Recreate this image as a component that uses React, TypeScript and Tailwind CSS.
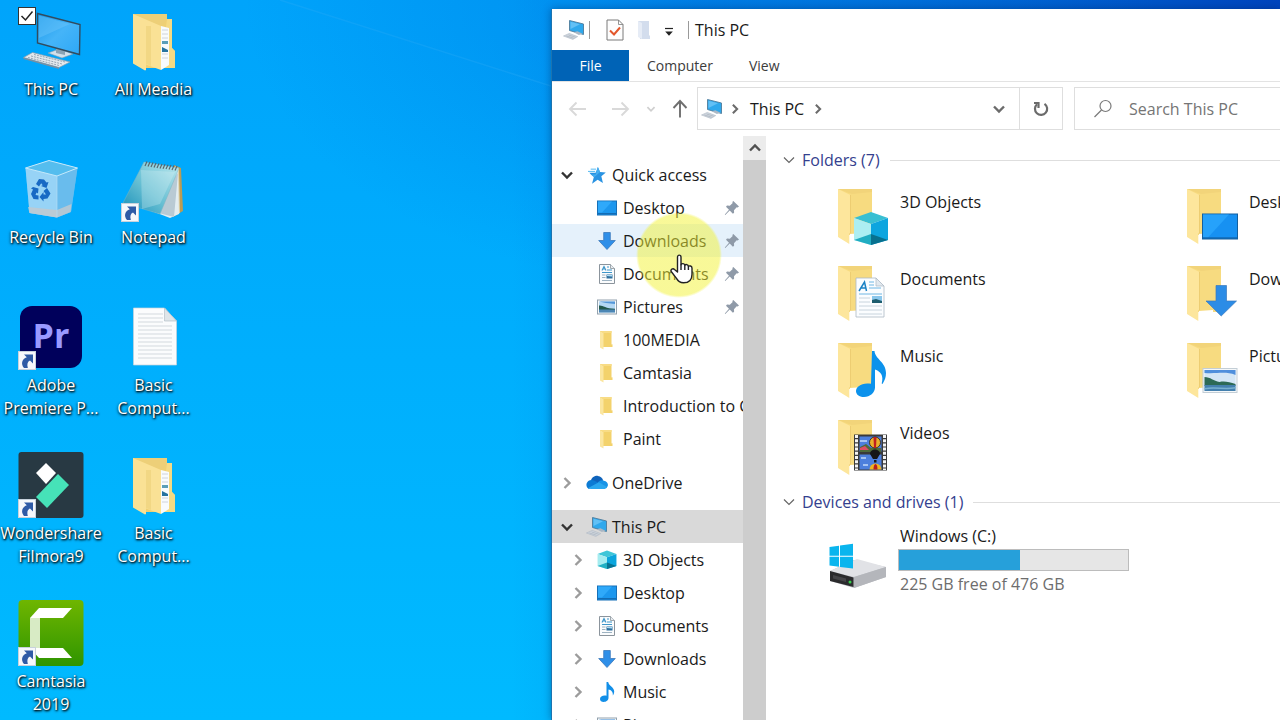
import { useId, type ReactNode } from "react";

/* ---------- small glyphs ---------- */

function Chevron({ dir, className = "", weight = 2.4 }: { dir: "down" | "right" | "up"; className?: string; weight?: number }) {
  const d = dir === "down" ? "M2 4.5 7 9.5 12 4.5" : dir === "up" ? "M2 9.5 7 4.5 12 9.5" : "M4.5 2 9.5 7 4.5 12";
  return (
    <svg viewBox="0 0 14 14" className={`shrink-0 ${className}`} fill="none" stroke="currentColor" strokeWidth={weight} aria-hidden="true">
      <path d={d} />
    </svg>
  );
}

function Pin() {
  return (
    <svg viewBox="0 0 16 16" className="size-4 shrink-0" fill="#8f9aa8" aria-hidden="true">
      <path d="M9.3 1 15 6.6l-1.4.9-.9-.3-2.7 3 .1 2.6-1.2 1-3.2-3.2L1.3 15l-.5-.4 4.2-4.8L2 6.7l1-1.1 2.8.1 2.900-2.600-.4-1z" />
    </svg>
  );
}

function PcSmall() {
  return (
    <svg viewBox="0 0 22 20" className="h-5 w-[22px] shrink-0" aria-hidden="true">
      <path d="m6.500.5 14 3.500v10.500L6.500 10.500z" fill="#2fa8ec" stroke="#4f7c9b" strokeWidth="0.900" />
      <path d="m7.500 1.800 9.500 2.500-9.500 4.800z" fill="#62c0f5" />
      <path d="m10.500 12.300 4-1 5 2.400-3.600 1.300z" fill="#aab7c4" />
      <path d="m.5 16 5.800-2.600 8.400 3.200-4.800 2.800z" fill="#d0d7df" stroke="#adb7c2" strokeWidth="0.600" />
      <path d="m3.400 16 7.200 2.200M5.600 15l7 2.200" stroke="#a2adb8" strokeWidth="0.600" />
    </svg>
  );
}

function StarIcon() {
  return (
    <svg viewBox="0 0 20 20" className="size-[18px] shrink-0" aria-hidden="true">
      <path d="m11 1 2.400 5.800 6.400.4-5 4.300 1.800 7.300-5.900-3.500-6.200 4.500 2-7.500-3.300-2.800-1.700-2h7z" fill="#2a93e2" />
      <path d="m11 1 2.400 5.800-6.200 5.500L3.200 9.500H8.500z" fill="#45aef0" />
      <path d="M3 3.500h6M0 6h8" stroke="#53b9f2" strokeWidth="1.100" />
    </svg>
  );
}

function DesktopSmall() {
  return (
    <svg viewBox="0 0 20 20" className="size-5 shrink-0" aria-hidden="true">
      <rect x="0.500" y="3" width="19" height="14" fill="#1c97ee" stroke="#1670b8" />
      <path d="M1 3.500h14L5 14.500H1z" fill="#2fa9fa" />
      <path d="M1 15.700h18" stroke="#1468ad" strokeWidth="1.200" />
    </svg>
  );
}

function DownloadSmall() {
  return (
    <svg viewBox="0 0 20 20" className="size-5 shrink-0" aria-hidden="true">
      <path d="M6.700 1.500h6.600V9.500h5L10 18.500 1.700 9.500h5z" fill="#2f8fe8" stroke="#3a78bb" strokeWidth="0.800" />
    </svg>
  );
}

function DocumentSmall() {
  return (
    <svg viewBox="0 0 20 20" className="size-5 shrink-0" aria-hidden="true">
      <path d="M2.500.500h11l4 4v15h-15z" fill="#fbfcfd" stroke="#8b949c" />
      <path d="M13.500.500v4h4" fill="#e8ecef" stroke="#8b949c" strokeWidth="0.800" />
      <path d="M5 6.500 7 2.500l2 4M5.500 5h3M10 3h2M10 6h5M5 8.500h10" stroke="#3e96ca" fill="none" strokeWidth="1.100" />
      <path d="M5 11h3.500M5 13.500h3.500M5 16.500h10" stroke="#9eb3c2" />
      <rect x="9.500" y="10.500" width="6" height="4" fill="#2f6f9d" />
      <path d="M10 11h5v1.500l-5-.5z" fill="#aedcf5" />
    </svg>
  );
}

function PictureSmall() {
  return (
    <svg viewBox="0 0 20 20" className="size-5 shrink-0" aria-hidden="true">
      <rect x="0.500" y="3" width="19" height="14" fill="#f7fafc" stroke="#93a2ae" />
      <rect x="2" y="4.500" width="16" height="11" fill="#b4d8f4" />
      <path d="M2 4.500h16v2.500L9 6z" fill="#5497d8" />
      <path d="M2 8.500c4-.5 6 3 16 3.300v1.700H2z" fill="#23594c" />
      <path d="M2 12.500h16v3H2z" fill="#4c86b4" />
    </svg>
  );
}

function FolderSmall() {
  return (
    <svg viewBox="0 0 20 20" className="size-5 shrink-0" aria-hidden="true">
      <path d="M3 1h11.500v13.500l1-.3V17H5.500z" fill="#f3d26c" />
      <path d="M3 1l3.500 2v16.500L3 17.500z" fill="#fbe6a0" />
      <path d="M6.500 3h8V1H3z" fill="#f8dc86" />
    </svg>
  );
}

function CubeIcon({ className }: { className: string }) {
  return (
    <svg viewBox="0 0 36 36" className={`shrink-0 ${className}`} aria-hidden="true">
      <path d="m18 1 17 6-17 6L1 7z" fill="#3fc6d8" />
      <path d="m1 7 17 6v21L1 29z" fill="#a5ecf0" />
      <path d="m35 7-17 6v21l17-5z" fill="#0ba5dd" />
      <path d="m1 29 17-6.500V34z" fill="#22b0c4" />
      <path d="m35 29-17-6.500V34z" fill="#087391" />
    </svg>
  );
}

function MusicSmall() {
  return (
    <svg viewBox="0 0 20 20" className="size-5 shrink-0" aria-hidden="true">
      <path d="M9.500 0h1.700c.3 4 6 5 6 9.500 0 1.500-.6 3-1.400 4 .5-4-2-5.500-4.300-6v8.200c0 2.500-2.300 4.200-4.800 4.200-2.200 0-3.700-1-3.700-2.900 0-2.300 3-4 6.500-3.200z" fill="#128fe8" />
    </svg>
  );
}

function CloudIcon() {
  return (
    <svg viewBox="0 0 24 16" className="h-[15px] w-[22px] shrink-0" aria-hidden="true">
      <path d="M5 7C6 2 10 .5 13 .8c3 .4 5 2.200 5.700 5L12 11z" fill="#0f63bb" />
      <path d="M5.500 5.300c3 0 5 1.500 10 4L3 15C-1.500 12.500.5 5.600 5.500 5.300z" fill="#0c7bd4" />
      <path d="M13 8c2-2.500 4.500-3 6.500-2 4.500.5 6 5.500 2.500 8z" fill="#1793e6" />
      <path d="M2.500 14 14 7.800l9 5c-.6 1.500-2 2.400-4 2.400H5.500c-1.200 0-2.300-.4-3-1.200z" fill="#2aa7ef" />
    </svg>
  );
}

/* ---------- desktop icons (66 x 66) ---------- */

function Shortcut() {
  return (
    <g>
      <rect x="0.500" y="47.500" width="17" height="18" fill="#f6f8fb" stroke="#c8d2dc" />
      <path d="M6 50.500h9v9l-3-3C9.500 57.500 8.800 60 9.800 64H6C2.500 60 4 55 8.800 53.300z" fill="#2f5ba6" />
    </g>
  );
}

function Tile({ children }: { children: ReactNode }) {
  return (
    <svg viewBox="0 0 66 66" className="size-[66px]" aria-hidden="true">
      {children}
    </svg>
  );
}

function ThisPcArt() {
  const id = useId();
  return (
    <Tile>
      <linearGradient id={id} x1="0" y1="0" x2="1" y2="1">
        <stop offset="0" stopColor="#1797e8" />
        <stop offset="0.500" stopColor="#45b4f8" />
        <stop offset="1" stopColor="#2ea8f6" />
      </linearGradient>
      <path d="m30 45 11-4 14 5-11 4z" fill="#d3e0ea" stroke="#7f9bb0" strokeWidth="0.600" />
      <path d="m38 40 9 2v5l-9-2z" fill="#8ba3b5" />
      <path d="m19.500 5.500 42.500 11-.5 30L19.500 35z" fill={`url(#${id})`} stroke="#324b5e" strokeWidth="1.400" />
      <path d="m21 7.500 31 8.500-31 14z" fill="#6cc5fb" opacity="0.450" />
      <path d="m5.500 49.500 9-5L52 54l-11 5.500z" fill="#e3e9ee" stroke="#8a9cab" strokeWidth="0.700" />
      <path d="m5.500 49.500 35.500 10v1.400l-35.500-10z" fill="#7990a2" />
      <path d="m10 49.500 31 8M13 48l31 8M16 46.500l31 7.500" stroke="#8b9dab" strokeWidth="0.900" strokeDasharray="2 1" />
    </Tile>
  );
}

function FolderFullArt() {
  return (
    <Tile>
      <path d="M12 6h34v5h5v29l3 3v17H20z" fill="#efd074" />
      <path d="M46 11h5v29l3 3v17H40z" fill="#f5da84" />
      <path d="m40 18 8 2v37l-8 5z" fill="#f8fbfd" />
      <path d="M41 22h6M41 26h6M41 30h6M41 46h6M41 50h6" stroke="#c5ccd3" strokeWidth="0.800" />
      <path d="M41 33h6v3h-6z" fill="#5a9eb8" />
      <path d="m41 39 6 3v2h-6z" fill="#26739f" />
      <path d="M12 6h34v5l-6 7-15-5z" fill="#edcf78" />
      <path d="m12 6 28 12v44l-15-5.500V62l-1 .5-12-7z" fill="#fae195" />
      <path d="M25 18h5v40l-5-2z" fill="#edd07a" opacity="0.600" />
    </Tile>
  );
}

function RecycleArt() {
  return (
    <Tile>
      <path d="M7.500 12 31 4.500 59.500 12 53 56 39 61.500 11.500 57z" fill="#7fc8f3" fillOpacity="0.850" />
      <path d="M7.500 12 39 20 39 61.500 11.500 57z" fill="#a5d8f5" fillOpacity="0.750" />
      <path d="M39 20 59.500 12 53 56 39 61.500z" fill="#68b9e9" fillOpacity="0.700" />
      <path d="m7.500 12 23.500-7.500L59.500 12 39 20z" fill="#55bdee" stroke="#c5e9fb" strokeWidth="1" />
      <path d="m10 51 29 3 14.500-6-1 8L39 61.500 11.500 57z" fill="#bfc9d0" fillOpacity="0.850" />
      <path d="M39 20v41" stroke="#b5ddf3" strokeWidth="0.700" />
      <g fill="#1769c4">
        <path d="m18 28 3-5 5 .500 2.500 3 2-.5-2 6-5.500-2 1.700-.8-1.500-2-2.200 3.200z" />
        <path d="m29 32 3.500 5.500-3 5-4 .5v2.500L21.500 41l4-5v2.500h2.500l-2.500-3.500z" />
        <path d="m15 31 5.500 1.500-.5 5-1.500-1-1 2.500 3 .5v4l-5-.5-2.500-5 2-4.500-2-1z" />
      </g>
    </Tile>
  );
}

function NotepadArt() {
  const id = useId();
  return (
    <Tile>
      <linearGradient id={id} x1="0" y1="1" x2="1" y2="0">
        <stop offset="0" stopColor="#178fb8" />
        <stop offset="0.450" stopColor="#67bfd3" />
        <stop offset="1" stopColor="#bce8ee" />
      </linearGradient>
      <path d="m53 9 7 3 2 43-10 6z" fill="#b99b55" />
      <path d="m54 10 4 3 1 44-9 4z" fill="#dfd1a7" />
      <path d="m23 52 30-40 4 3 1 43-9 4z" fill="#e3edf1" />
      <path d="m30 55 27-38-4 44z" fill="#b9cad4" />
      <path d="m23 6 35 6-19 46L2 47z" fill={`url(#${id})`} stroke="#78b5c4" strokeWidth="0.500" />
      <path d="m20 14 34 2-15 32-18 5z" fill="#e0f5f8" opacity="0.280" />
      <path d="m24 10 2-4.500M27 10.500l2-4.500M30 11l2-4.500M33 11.500 35 7M36 12l2-4.500M39 12.500 41 8M42 12.800l2-4.500M45 13l2-4.300M48 13.500 50 9M51 14l2-4.500M54 14.500l2-4.500" stroke="#58666d" strokeWidth="1.200" />
      <Shortcut />
    </Tile>
  );
}

function PremiereArt() {
  return (
    <div className="relative grid size-[62px] place-items-center rounded-xl bg-[#00005b] pb-1 font-['Open_Sans',sans-serif] text-[34px] leading-none font-bold text-[#9999ff] [text-shadow:none]">
      <span>Pr</span>
      <svg viewBox="0 0 66 66" className="absolute -top-[2px] -left-0.5 size-[66px]" aria-hidden="true"><Shortcut /></svg>
    </div>
  );
}

function FilmoraArt() {
  return (
    <Tile>
      <rect x="0.500" y="0" width="65" height="66" rx="3" fill="#283943" />
      <path d="m28 11 10 10-10 11-10-11z" fill="#fff" />
      <path d="m40 22 11 11-22 23-11-11z" fill="#46e2b8" />
      <Shortcut />
    </Tile>
  );
}

function CamtasiaArt() {
  const id = useId();
  return (
    <Tile>
      <linearGradient id={id} x1="0" y1="0" x2="0" y2="1">
        <stop offset="0" stopColor="#6fb600" />
        <stop offset="1" stopColor="#2f9500" />
      </linearGradient>
      <rect x="0.500" y="0" width="65" height="66" rx="4" fill={`url(#${id})`} />
      <path d="M12 18h10v31l-4 4-6-5z" fill="#d8ebc5" />
      <path d="M21 8h33l-9 10H12z" fill="#fff" />
      <path d="M12 48h33l9 10H21z" fill="#fff" />
      <Shortcut />
    </Tile>
  );
}

function TextFileArt() {
  return (
    <Tile>
      <path d="M12.500 4h31l12 13v44h-43z" fill="#fbfcfd" stroke="#c9d3da" strokeWidth="0.700" />
      <path d="M43.500 4v13h12z" fill="#dfe5e9" stroke="#b5c0c8" strokeWidth="0.700" />
      <path d="M17 10h25M17 14h25M17 18h25M17 22h34M17 26h34M17 30h34M17 34h34M17 38h34M17 42h34M17 46h34M17 50h34M17 54h34" stroke="#d3d9de" strokeWidth="1" />
    </Tile>
  );
}

const desktopItems: { lines: string[]; art: ReactNode; checked?: boolean }[] = [
  { lines: ["This PC"], art: <ThisPcArt />, checked: true },
  { lines: ["Recycle Bin"], art: <RecycleArt /> },
  { lines: ["Adobe", "Premiere P..."], art: <PremiereArt /> },
  { lines: ["Wondershare", "Filmora9"], art: <FilmoraArt /> },
  { lines: ["Camtasia", "2019"], art: <CamtasiaArt /> },
  { lines: ["All Meadia"], art: <FolderFullArt /> },
  { lines: ["Notepad"], art: <NotepadArt /> },
  { lines: ["Basic", "Comput..."], art: <TextFileArt /> },
  { lines: ["Basic", "Comput..."], art: <FolderFullArt /> },
];

function Desktop() {
  return (
    <section aria-label="Desktop" className="relative w-[551px] shrink-0">
      <svg viewBox="0 0 551 200" className="absolute inset-x-0 top-0" fill="none" aria-hidden="true">
        <path d="M280 0 551 86" stroke="#35b0f8" strokeOpacity="0.250" strokeWidth="1.500" />
      </svg>
      <ul className="relative grid w-[205px] grid-flow-col grid-cols-[102px_103px] grid-rows-[repeat(5,148px)] pt-2">
        {desktopItems.map((item, i) => (
          <li key={i} className="relative">
            <button type="button" className="flex w-full flex-col items-center gap-1 text-base leading-[23px] whitespace-nowrap text-white [text-shadow:1px_1px_2px_#000,0_1px_3px_rgba(0,0,0,0.8)]">
              <span className="grid size-[66px] place-items-center">{item.art}</span>
              <span>
                {item.lines.map((line) => (
                  <span key={line} className="block">{line}</span>
                ))}
              </span>
            </button>
            {item.checked && (
              <span className="absolute -top-px left-[18px] grid size-[18px]">
                <input type="checkbox" defaultChecked aria-label={item.lines[0]} className="peer col-start-1 row-start-1 size-[18px] appearance-none border border-[#333] bg-white" />
                <svg viewBox="0 0 18 18" className="pointer-events-none col-start-1 row-start-1 size-[18px] opacity-0 peer-checked:opacity-100" fill="none" stroke="#222" strokeWidth="1.500" aria-hidden="true">
                  <path d="m3.500 9 4 4 7-8.500" />
                </svg>
              </span>
            )}
          </li>
        ))}
      </ul>
    </section>
  );
}

/* ---------- window chrome ---------- */

function TitleBar() {
  return (
    <header className="flex h-[41px] items-center pl-[11px] text-base text-[#1a1a1a]">
      <PcSmall />
      <span className="ml-1 h-[18px] w-px bg-[#9a9a9a]" />
      <button type="button" aria-label="Properties" className="ml-4">
        <svg viewBox="0 0 18 22" className="h-[22px] w-[18px]" aria-hidden="true">
          <path d="M1 1h11.500L17 5.500V21H1z" fill="#fdfdfd" stroke="#7b7b7b" />
          <path d="M12.500 1v4.500H17" fill="none" stroke="#7b7b7b" strokeWidth="0.800" />
          <path d="m4 11.500 4 4 6-7" fill="none" stroke="#e2562b" strokeWidth="2" />
        </svg>
      </button>
      <button type="button" aria-label="New folder" className="ml-3">
        <svg viewBox="0 0 16 20" className="h-5 w-4" aria-hidden="true">
          <path d="M2 1h11v14l1 1v3H4z" fill="#d3dded" />
          <path d="m2 1 4 2v16l-4-2z" fill="#e6ecf6" />
        </svg>
      </button>
      <button type="button" aria-label="Customize Quick Access Toolbar" className="ml-3 pt-1">
        <svg viewBox="0 0 10 10" className="size-2.5" aria-hidden="true">
          <path d="M1 1.500h8" stroke="#222" strokeWidth="1.200" />
          <path d="M1.200 4.500h7.600L5 8.700z" fill="#222" />
        </svg>
      </button>
      <span className="mr-1.5 ml-3.5 h-[18px] w-px bg-[#9a9a9a]" />
      <h1>This PC</h1>
    </header>
  );
}

function Ribbon() {
  return (
    <div className="flex h-8 border-b border-[#e3e3e3] text-sm text-[#3c3c3c]">
      <button type="button" className="h-[31px] w-[77px] bg-[#0063b6] text-white">File</button>
      <button type="button" className="ml-[18px]">Computer</button>
      <button type="button" className="ml-9">View</button>
    </div>
  );
}

function Arrow({ d, className }: { d: string; className: string }) {
  return (
    <svg viewBox="0 0 20 20" className={`size-5 ${className}`} fill="none" stroke="currentColor" strokeWidth="1.900" aria-hidden="true">
      <path d={d} />
    </svg>
  );
}

function AddressRow() {
  return (
    <div className="flex items-center pt-[5px] pb-1.5">
      <div className="flex w-[145px] shrink-0 items-center pl-4">
        <button type="button" aria-label="Back"><Arrow d="M18 10H2M8.500 3.500 2 10l6.500 6.500" className="text-[#d9d9d9]" /></button>
        <button type="button" aria-label="Forward" className="ml-[22px]"><Arrow d="M2 10h16M11.500 3.500 18 10l-6.500 6.500" className="text-[#d9d9d9]" /></button>
        <button type="button" aria-label="Recent locations" className="ml-4"><Chevron dir="down" className="size-2.5 text-[#cfcfcf]" /></button>
        <button type="button" aria-label="Up" className="ml-3.5"><Arrow d="M10 18.500V2M3.500 9 10 2l6.500 7" className="text-[#6f6f6f]" /></button>
      </div>
      <div className="flex h-[43px] w-[366px] shrink-0 border border-[#dedede] text-[#1a1a1a]">
        <div className="flex flex-1 items-center pl-[3px]">
          <PcSmall />
          <Chevron dir="right" className="ml-1.5 size-3 text-[#6b6b6b]" />
          <button type="button" className="ml-[9px] text-base">This PC</button>
          <Chevron dir="right" className="ml-2 size-3 text-[#6b6b6b]" />
        </div>
        <button type="button" aria-label="Previous locations" className="grid w-10 place-items-center"><Chevron dir="down" className="size-3.5 text-[#6b6b6b]" /></button>
        <button type="button" aria-label="Refresh" className="grid w-[43px] place-items-center border-l border-[#dedede]">
          <svg viewBox="0 0 16 16" className="size-4" fill="none" stroke="#6b6b6b" strokeWidth="2.200" aria-hidden="true">
            <path d="M11.500 2.800A6.100 6.100 0 1 1 4 3.300" />
            <path d="M1 2h4.500v5" />
          </svg>
        </button>
      </div>
      <label className="ml-[11px] flex h-[43px] w-[340px] shrink-0 items-center border border-[#dedede] pl-[18px]">
        <svg viewBox="0 0 20 20" className="size-5" fill="none" stroke="#7a7a7a" strokeWidth="1.200" aria-hidden="true">
          <circle cx="12.500" cy="7" r="5.500" />
          <path d="M8.500 11 1.500 18" />
        </svg>
        <input type="search" aria-label="Search This PC" placeholder="Search This PC" className="ml-4 min-w-0 flex-1 text-base outline-none placeholder:text-[#757575]" />
      </label>
    </div>
  );
}

/* ---------- navigation pane ---------- */

function RootRow({ label, icon, open, selected }: { label: string; icon: ReactNode; open?: boolean; selected?: boolean }) {
  return (
    <button type="button" aria-expanded={!!open} className={`flex h-[33px] w-full shrink-0 items-center pl-2 text-left ${selected ? "bg-[#d9d9d9]" : ""}`}>
      <Chevron dir={open ? "down" : "right"} className={open ? "size-3.5 text-[#333]" : "size-3.5 text-[#9c9c9c]"} />
      <span className="ml-2 flex w-[30px] justify-center">{icon}</span>
      <span>{label}</span>
    </button>
  );
}

function ChildRow({ label, icon, pinned, expandable, hover }: { label: string; icon: ReactNode; pinned?: boolean; expandable?: boolean; hover?: boolean }) {
  return (
    <li>
      <button type="button" className={`flex h-[33px] w-full items-center pr-[3px] pl-[19px] text-left whitespace-nowrap hover:bg-[#e5f1fb] ${hover ? "bg-[#e5f1fb]" : ""}`}>
        <span className="w-[26px] shrink-0">{expandable && <Chevron dir="right" className="size-3.5 text-[#9c9c9c]" />}</span>
        {icon}
        <span className="ml-1.5 flex-1">{label}</span>
        {pinned && <Pin />}
      </button>
    </li>
  );
}

function NavPane() {
  return (
    <nav aria-label="Navigation pane" className="flex w-[191px] shrink-0 flex-col gap-[11px] overflow-hidden pt-[22px] text-base text-[#1a1a1a]">
      <div className="shrink-0">
        <RootRow open label="Quick access" icon={<StarIcon />} />
        <ul>
          <ChildRow pinned label="Desktop" icon={<DesktopSmall />} />
          <ChildRow pinned hover label="Downloads" icon={<DownloadSmall />} />
          <ChildRow pinned label="Documents" icon={<DocumentSmall />} />
          <ChildRow pinned label="Pictures" icon={<PictureSmall />} />
          <ChildRow label="100MEDIA" icon={<FolderSmall />} />
          <ChildRow label="Camtasia" icon={<FolderSmall />} />
          <ChildRow label="Introduction to Computer" icon={<FolderSmall />} />
          <ChildRow label="Paint" icon={<FolderSmall />} />
        </ul>
      </div>
      <RootRow label="OneDrive" icon={<CloudIcon />} />
      <div className="shrink-0">
        <RootRow open selected label="This PC" icon={<PcSmall />} />
        <ul>
          <ChildRow expandable label="3D Objects" icon={<CubeIcon className="size-5" />} />
          <ChildRow expandable label="Desktop" icon={<DesktopSmall />} />
          <ChildRow expandable label="Documents" icon={<DocumentSmall />} />
          <ChildRow expandable label="Downloads" icon={<DownloadSmall />} />
          <ChildRow expandable label="Music" icon={<MusicSmall />} />
          <ChildRow expandable label="Pictures" icon={<PictureSmall />} />
        </ul>
      </div>
    </nav>
  );
}

/* ---------- content pane ---------- */

function FolderTile({ children }: { children: ReactNode }) {
  return (
    <svg viewBox="0 0 54 60" className="h-[60px] w-[54px] shrink-0" aria-hidden="true">
      <path d="M2 3h34v46H12z" fill="#f7db80" />
      <path d="M2 3h34v3L16 8z" fill="#f2d47a" />
      <path d="m14 48 14-1v4l-14 5z" fill="#fff" />
      <path d="m2 3 12.500 6v38l-1.200 1v10L2 51z" fill="#fde69c" />
      <path d="m13.300 48 1.200-1V9" fill="none" stroke="#e6c465" strokeWidth="0.700" />
      <g transform="translate(0 1)">{children}</g>
    </svg>
  );
}

const cubeArt = (
  <g>
    <path d="m35 25 17 6-17 6-17-6z" fill="#39bfd2" />
    <path d="m18 31 17 6v21l-17-5z" fill="#aceef2" />
    <path d="m52 31-17 6v21l17-5z" fill="#0da5df" />
    <path d="m18 53 17-6v11z" fill="#21adc2" />
    <path d="m52 53-17-6v11z" fill="#08718f" />
  </g>
);

const documentArt = (
  <g>
    <path d="M20 14h20l8 8v31H20z" fill="#fbfdff" stroke="#adb9c4" strokeWidth="0.800" />
    <path d="M40 14v8h8z" fill="#e2e9ef" stroke="#adb9c4" strokeWidth="0.700" />
    <path d="m23 27 5.500-9 2 9M25 24h5.500" fill="none" stroke="#1b82c5" strokeWidth="1.500" />
    <path d="M33 18h5M33 21h5M33 24h12M23 30h23" stroke="#5eaee0" strokeWidth="0.900" />
    <path d="M23 34h11M23 38h11M23 42h23M23 46h23M23 50h23" stroke="#c2cfd9" strokeWidth="0.900" />
    <rect x="36" y="32" width="10" height="7" fill="#8ac7ec" />
    <path d="m36 36 4-1 6 2v2H36z" fill="#1d5d6e" />
  </g>
);

const musicArt = (
  <path d="M36 10h2.500c.5 8 11.500 11 11.500 22 0 4-1.200 7.500-3.500 11l-.8-.4c2.200-8-1-12-6.700-14v18c0 5-5 9.500-11 9.500-5 0-8-2.600-8-6 0-4.500 6-9 15-7.300z" fill="#0c92ec" />
);

const videoArt = (
  <g>
    <rect x="18" y="16.500" width="33" height="36" fill="#3a3a3a" />
    <rect x="23.500" y="18.500" width="22" height="15" fill="#4d7fdc" />
    <rect x="23.500" y="36.500" width="22" height="15" fill="#4d7fdc" />
    <path d="m24 29 6-3 5 4h10v4H24z" fill="#4e6a3a" />
    <path d="m24 30 5-2 4 4h-9z" fill="#dd4e63" />
    <path d="M24 23h7M25 40h5M27 47h5" stroke="#c4daf8" strokeWidth="1.600" />
    <circle cx="39" cy="24.500" r="5.500" fill="#e8b02d" stroke="#2a1a10" strokeWidth="0.800" />
    <path d="M37.500 19h3l-.5 11h-2z" fill="#c01f1f" />
    <path d="M34 36c0-6 10-6 10 0l-3 5h-4z" fill="#161616" />
    <path d="M38 42h2.500v2.500H38z" fill="#161616" />
    <path d="M33.500 51.500a6 6 0 0 1 12 0z" fill="#f0b420" />
    <path d="M37.500 51.500a2 5.500 0 0 1 4 0z" fill="#b81c1c" />
    <path d="M20.500 17v35M48.500 17v35" stroke="#f4f4f4" strokeWidth="3" strokeDasharray="3 1.200" />
  </g>
);

const desktopArt = (
  <g>
    <rect x="17.500" y="27" width="35" height="25" fill="#1791f2" stroke="#14609f" />
    <path d="M18 27.500h26L23 50.500h-5z" fill="#26a2fb" />
    <path d="M18 51h34" stroke="#0f5796" strokeWidth="1.200" />
  </g>
);

const downloadArt = <path d="M31 21.500h10.500V37h10L36.200 52 21 37h10z" fill="#2c8ce6" stroke="#3a79bd" strokeWidth="0.700" />;

const pictureArt = (
  <g>
    <rect x="18" y="27.500" width="34" height="24" fill="#f5f8fa" stroke="#c3ced6" />
    <rect x="19.500" y="29" width="31" height="21" fill="#d3e6f6" />
    <path d="M19.500 29h31v5c-10-4-18-1-31-2z" fill="#4f8fdc" />
    <path d="M19.500 36c6 0 9 4 15 5 5-1 10 0 16 2v2h-31z" fill="#2d6a55" />
    <path d="M19.500 44h31v6h-31z" fill="#4480ae" />
    <path d="M19.500 47c10-2 20 1 31-1v1.500c-10 2-20-1-31 1z" fill="#78b1d0" />
  </g>
);

const folders: { name: string; art: ReactNode }[] = [
  { name: "3D Objects", art: cubeArt },
  { name: "Desktop", art: desktopArt },
  { name: "Documents", art: documentArt },
  { name: "Downloads", art: downloadArt },
  { name: "Music", art: musicArt },
  { name: "Pictures", art: pictureArt },
  { name: "Videos", art: videoArt },
];

function GroupHeader({ children }: { children: ReactNode }) {
  return (
    <h2 className="flex h-6 items-center text-base text-[#34408e]">
      <Chevron dir="down" weight={1.2} className="size-3.5 text-[#666]" />
      <span className="ml-1.5 whitespace-nowrap">{children}</span>
      <span className="ml-2.5 h-px flex-1 bg-[#dedede]" />
    </h2>
  );
}

function DriveArt() {
  return (
    <svg viewBox="0 0 60 46" className="h-[46px] w-[60px] shrink-0" aria-hidden="true">
      <path d="m2 28 24-11 32 7v10L26 45 2 38z" fill="#bfc1c6" />
      <path d="m2 28 27-12 29 8-32 10z" fill="#e1e2e6" />
      <path d="m26 34 32-10v10L26 45z" fill="#b4b6bb" />
      <path d="m2 28 23.500 6.500V44L2 38z" fill="#2b2b2d" />
      <path d="M5 32 18 35.500v3.500L5 35.500z" fill="#454548" />
      <circle cx="22" cy="39" r="1.500" fill="#36d04c" />
      <path d="M1.500 4 11 2.700v10.100H1.500zM12 2.500 25 .7v12.100H12zM1.500 13.800H11v10L1.500 22.500zM12 13.800h13v11.800l-13-1.700z" fill="#0ab5ee" />
    </svg>
  );
}

function Content() {
  const usedPercent = 53;
  return (
    <main className="min-w-0 flex-1 overflow-hidden pt-3 pl-4 text-base text-[#1a1a1a]">
      <GroupHeader>Folders (7)</GroupHeader>
      <ul className="grid w-[698px] auto-rows-[77px] grid-cols-2 pt-3.5 pl-[54px]">
        {folders.map((f, i) => (
          <li key={f.name} className={i % 2 ? "pl-[27px]" : ""}>
            <button type="button" className="flex w-full items-start gap-2.5 text-left">
              <FolderTile>{f.art}</FolderTile>
              <span className="pt-1">{f.name}</span>
            </button>
          </li>
        ))}
      </ul>
      <div className="-mt-1">
        <GroupHeader>Devices and drives (1)</GroupHeader>
        <button type="button" className="mt-2.5 flex w-[347px] items-center gap-2.5 pl-[46px] text-left">
          <span className="pt-3"><DriveArt /></span>
          <span className="flex-1">
            <span id="drive-c" className="block pl-0.5 leading-6">Windows (C:)</span>
            <span role="meter" aria-labelledby="drive-c" aria-valuemin={0} aria-valuemax={100} aria-valuenow={usedPercent} className="my-px block h-[22px] border border-[#bcbcbc] bg-[#e6e6e6]">
              <span className="block h-full bg-[#26a0da]" style={{ width: `${usedPercent}%` }} />
            </span>
            <span className="block pl-0.5 leading-6 text-[#6d6d6d]">225 GB free of 476 GB</span>
          </span>
        </button>
      </div>
    </main>
  );
}

function HandPointer() {
  return (
    <div className="pointer-events-none absolute top-[203px] left-[84px] size-[86px]" aria-hidden="true">
      <div className="size-full rounded-full bg-[radial-gradient(closest-side,rgba(242,242,50,0.5)_94%,rgba(242,242,50,0))]" />
      <svg viewBox="0 0 24 30" className="absolute top-[42px] left-[34px] h-[30px] w-6" fill="#fff" stroke="#222" strokeWidth="1.400" strokeLinejoin="round">
        <path d="M7.500 18V3.200C7.500.4 11 .4 11 3.200v7.600c.6-1.700 3.600-1.500 3.800.6.800-1.400 3.400-1 3.600 1 1-1 3.600-.6 3.600 1.800v6c0 5-2.500 8.600-8.500 8.600-4 0-5.800-2-7.200-4.600L1.200 17.500c-1-2 1.700-3.600 3.300-2z" />
        <path d="M11 10.500V16M14.800 11.500V16M18.400 12.500V16" fill="none" />
      </svg>
    </div>
  );
}

function ExplorerWindow() {
  return (
    <section aria-label="This PC" className="relative mt-[9px] flex min-w-0 flex-1 flex-col border-l border-[#1c74b0] bg-white shadow-[0_0_8px_rgba(0,30,80,0.4)]">
      <TitleBar />
      <Ribbon />
      <div className="flex min-h-0 flex-1 flex-col overflow-hidden">
        <AddressRow />
        <div className="flex min-h-0 flex-1">
          <NavPane />
          <div className="flex w-[23px] shrink-0 flex-col bg-[#cdcdcd]">
            <button type="button" aria-label="Scroll up" className="grid h-6 place-items-center bg-[#ececec]"><Chevron dir="up" className="size-3.5 text-[#505050]" /></button>
          </div>
          <Content />
        </div>
      </div>
      <HandPointer />
    </section>
  );
}

export default function App() {
  return (
    <div className="flex h-screen overflow-hidden bg-[radial-gradient(36%_40%_at_55%_0%,rgba(0,96,214,0.35),transparent),linear-gradient(90deg,transparent_40%,#0044bd_100%),linear-gradient(180deg,#00a4fb_0%,#00baff_100%)] font-['Open_Sans','Noto_Sans',sans-serif]">
      <Desktop />
      <ExplorerWindow />
    </div>
  );
}
